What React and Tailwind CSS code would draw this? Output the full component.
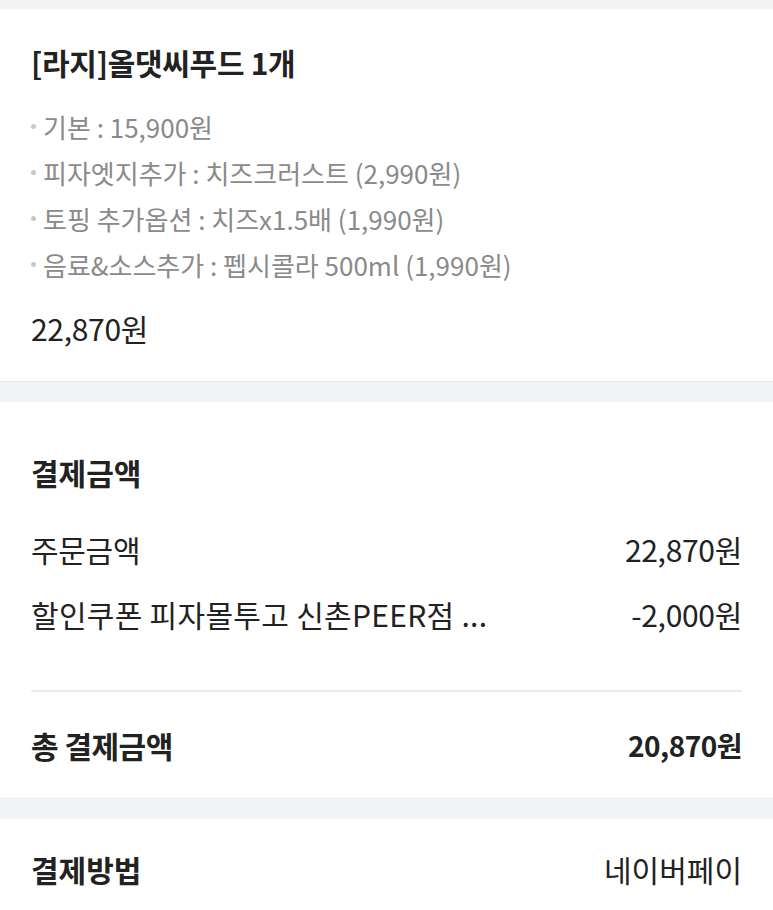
export default function App() {
  const font = { fontFamily: '"Noto Sans CJK KR", "Noto Sans", sans-serif' };
  const options = [
    "기본 : 15,900원",
    "피자엣지추가 : 치즈크러스트 (2,990원)",
    "토핑 추가옵션 : 치즈x1.5배 (1,990원)",
    "음료&소스추가 : 펩시콜라 500ml (1,990원)",
  ];
  return (
    <div style={font} className="w-[773px] bg-[#f3f4f6] text-[#222]">
      <div className="h-[9px]" />
      <section className="bg-white px-[31px] pt-[35px] pb-[35px]">
        <div className="text-[30px] font-bold leading-[36px] tracking-[-0.3px]">[라지]올댓씨푸드 1개</div>
        <ul className="mt-[23px] flex flex-col">
          {options.map((o) => (
            <li key={o} className="flex items-center h-[46px] text-[26px] text-[#8a8a8a]">
              <span className="w-[5px] h-[5px] rounded-full bg-[#c8c8c8] mr-[7px]" />
              {o}
            </li>
          ))}
        </ul>
        <div className="mt-[23px] text-[30px] leading-[36px] tracking-[-0.3px]">22,870원</div>
      </section>
      <div className="h-[21px] border-t border-[#e6e6e6]" />
      <section className="bg-white px-[31px] pt-[52px] pb-[35px] border-b border-[#ececec]">
        <div className="text-[30px] font-bold leading-[36px]">결제금액</div>
        <div className="mt-[41px] flex justify-between text-[30px] leading-[36px] tracking-[-0.3px]">
          <span>주문금액</span>
          <span>22,870원</span>
        </div>
        <div className="mt-[29px] flex justify-between text-[30px] leading-[36px]">
          <span className="tracking-[0.3px]">할인쿠폰 피자몰투고 신촌PEER점 ...</span>
          <span className="tracking-[-0.3px]">-2,000원</span>
        </div>
        <div className="mt-[58px] h-[2px] bg-[#ebebeb]" />
        <div className="mt-[35px] flex justify-between font-bold leading-[36px] tracking-[-0.5px]">
          <span className="text-[30px]">총 결제금액</span>
          <span className="text-[28px]">20,870원</span>
        </div>
      </section>
      <div className="h-[20px]" />
      <section className="bg-white px-[31px] pt-[32px] pb-[24px]">
        <div className="flex justify-between leading-[36px]">
          <span className="text-[30px] font-bold">결제방법</span>
          <span className="text-[30px]">네이버페이</span>
        </div>
      </section>
    </div>
  );
}
